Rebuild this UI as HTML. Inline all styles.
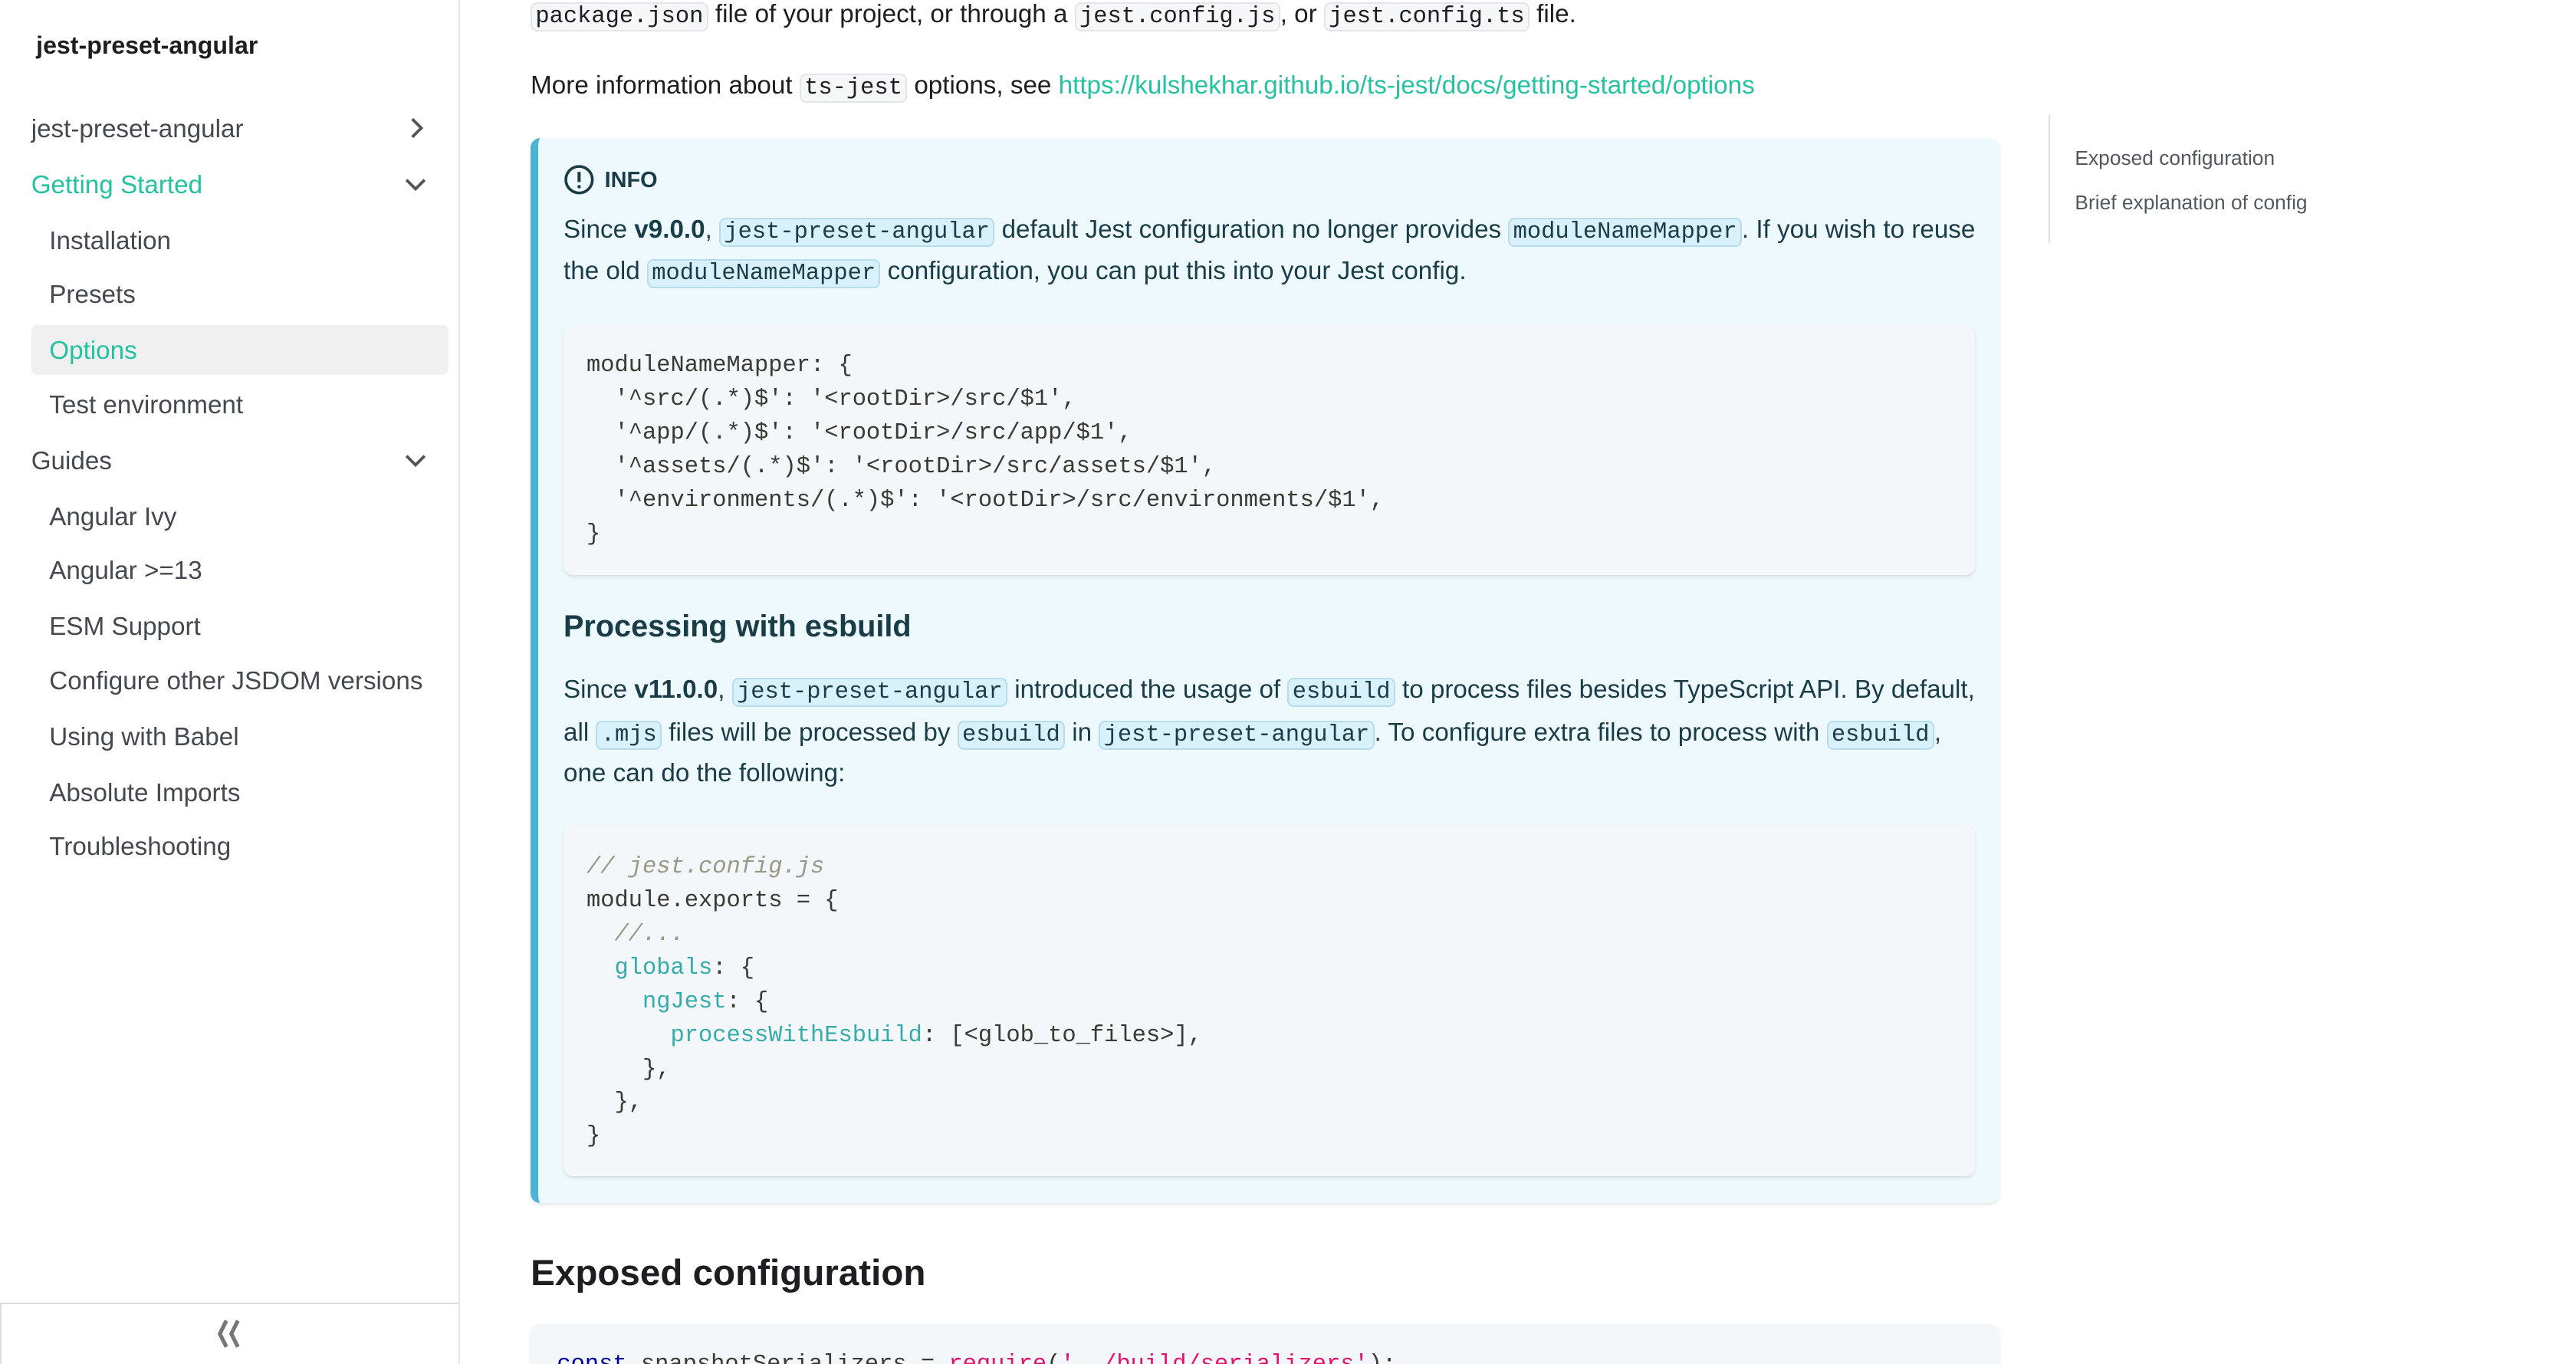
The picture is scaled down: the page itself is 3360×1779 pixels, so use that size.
<!DOCTYPE html>
<html><head><meta charset="utf-8"><style>
html,body{margin:0;padding:0;background:#fff;overflow:hidden}
#w{zoom:2.142857;width:1568px;height:830px;position:relative;font-family:"Liberation Sans",sans-serif;color:#1c1e21;overflow:hidden}
.a{position:absolute;white-space:nowrap}
.side{left:0;top:0;width:279px;height:830px;border-right:1px solid #e3e5e8}
.nav{font-size:15.5px;color:#444950;}
.g{color:#25c2a0}
.chev{position:absolute;left:246px;width:14px;height:14px}
code,.mono{font-family:"Liberation Mono",monospace}
.p{font-size:15.5px;color:#1c1e21;line-height:26px}
.ic{font-size:14.2px;background:#f6f7f8;border:1px solid #e3e5e8;border-radius:4px;padding:0 2px}
.ii{font-size:14.2px;background:#d9f1fb;border:1px solid #b6dde9;border-radius:4px;padding:0 2px;color:#193c47}
.cb{position:absolute;background:#f4f7fa;border-radius:6px;box-shadow:0 1px 2px rgba(0,0,0,.1);font-family:"Liberation Mono",monospace;font-size:14.2px;line-height:20.5px;color:#393a34;white-space:pre}
.cm{color:#999988;font-style:italic}.k{color:#36acaa}
</style></head><body><div id="w">
<div class="a side"></div>
<div class="a" style="left:22px;top:19px;font-size:15px;font-weight:bold;color:#1c1e21">jest-preset-angular</div>
<div class="a nav" style="left:19px;top:70px">jest-preset-angular</div>
<svg class="chev" style="top:71px" viewBox="0 0 14 14"><path d="M5 1.5 L10.5 7 L5 12.5" fill="none" stroke="#555" stroke-width="1.8"/></svg>
<div class="a nav g" style="left:19px;top:104px">Getting Started</div>
<svg class="chev" style="top:105px" viewBox="0 0 14 14"><path d="M1.5 4.5 L7 10 L12.5 4.5" fill="none" stroke="#555" stroke-width="1.8"/></svg>
<div class="a nav" style="left:30px;top:138px">Installation</div>
<div class="a nav" style="left:30px;top:171px">Presets</div>
<div class="a" style="left:19px;top:198px;width:254px;height:30px;background:#f0f0f0;border-radius:4px"></div>
<div class="a nav g" style="left:30px;top:205px">Options</div>
<div class="a nav" style="left:30px;top:238px">Test environment</div>
<div class="a nav" style="left:19px;top:272px">Guides</div>
<svg class="chev" style="top:273px" viewBox="0 0 14 14"><path d="M1.5 4.5 L7 10 L12.5 4.5" fill="none" stroke="#555" stroke-width="1.8"/></svg>
<div class="a nav" style="left:30px;top:306px">Angular Ivy</div>
<div class="a nav" style="left:30px;top:339px">Angular &gt;=13</div>
<div class="a nav" style="left:30px;top:373px">ESM Support</div>
<div class="a nav" style="left:30px;top:406px">Configure other JSDOM versions</div>
<div class="a nav" style="left:30px;top:440px">Using with Babel</div>
<div class="a nav" style="left:30px;top:474px">Absolute Imports</div>
<div class="a nav" style="left:30px;top:507px">Troubleshooting</div>
<div class="a" style="left:0;top:793px;width:279px;height:37px;border-top:1px solid #dadde1;border-left:1px solid #dadde1;box-sizing:border-box"></div>
<svg class="a" style="left:129px;top:801px" width="22" height="22" viewBox="0 0 22 22"><path d="M9 3 L5 11 L9 19 M16 3 L12 11 L16 19" fill="none" stroke="#777" stroke-width="2.4"/></svg>

<div class="a p" style="left:323px;top:-4px"><code class="ic">package.json</code> file of your project, or through a <code class="ic">jest.config.js</code>, or <code class="ic">jest.config.ts</code> file.</div>
<div class="a p" style="left:323px;top:39px">More information about <code class="ic">ts-jest</code> options, see <span style="color:#25c2a0">https://kulshekhar.github.io/ts-jest/docs/getting-started/options</span></div>

<div class="a" style="left:323px;top:84px;width:894px;height:648px;background:#eef9fd;border-left:5px solid #4cb3d4;border-radius:6px;box-sizing:border-box;box-shadow:0 1px 2px rgba(0,0,0,.1)"></div>
<svg class="a" style="left:343px;top:100px" width="19" height="19" viewBox="0 0 20 20"><circle cx="10" cy="10" r="8.5" fill="none" stroke="#193c47" stroke-width="1.8"/><path d="M10 5v6.5" stroke="#193c47" stroke-width="2"/><circle cx="10" cy="14.5" r="1.1" fill="#193c47"/></svg>
<div class="a" style="left:368px;top:102px;font-size:13.5px;font-weight:bold;color:#193c47">INFO</div>
<div class="a p" style="left:343px;top:127px;color:#193c47">Since <b>v9.0.0</b>, <code class="ii">jest-preset-angular</code> default Jest configuration no longer provides <code class="ii">moduleNameMapper</code>. If you wish to reuse</div>
<div class="a p" style="left:343px;top:152px;color:#193c47">the old <code class="ii">moduleNameMapper</code> configuration, you can put this into your Jest config.</div>
<div class="cb" style="left:343px;top:198px;width:859px;height:152px;padding:15px 0 0 14px;box-sizing:border-box">moduleNameMapper: {
  '^src/(.*)$': '&lt;rootDir&gt;/src/$1',
  '^app/(.*)$': '&lt;rootDir&gt;/src/app/$1',
  '^assets/(.*)$': '&lt;rootDir&gt;/src/assets/$1',
  '^environments/(.*)$': '&lt;rootDir&gt;/src/environments/$1',
}</div>
<div class="a" style="left:343px;top:371px;font-size:18.5px;font-weight:bold;color:#193c47">Processing with esbuild</div>
<div class="a p" style="left:343px;top:407px;color:#193c47">Since <b>v11.0.0</b>, <code class="ii">jest-preset-angular</code> introduced the usage of <code class="ii">esbuild</code> to process files besides TypeScript API. By default,</div>
<div class="a p" style="left:343px;top:433px;color:#193c47">all <code class="ii">.mjs</code> files will be processed by <code class="ii">esbuild</code> in <code class="ii">jest-preset-angular</code>. To configure extra files to process with <code class="ii">esbuild</code>,</div>
<div class="a p" style="left:343px;top:458px;color:#193c47">one can do the following:</div>
<div class="cb" style="left:343px;top:502px;width:859px;height:214px;padding:16px 0 0 14px;box-sizing:border-box"><span class="cm">// jest.config.js</span>
module.exports = {
  <span class="cm">//...</span>
  <span class="k">globals</span>: {
    <span class="k">ngJest</span>: {
      <span class="k">processWithEsbuild</span>: [&lt;glob_to_files&gt;],
    },
  },
}</div>
<div class="a" style="left:323px;top:762px;font-size:22.2px;font-weight:bold;color:#1c1e21">Exposed configuration</div>
<div class="cb" style="left:323px;top:806px;width:894px;height:40px;padding:15px 0 0 16px;box-sizing:border-box"><span style="color:#00009f">const</span> snapshotSerializers = <span style="color:#e3116c">require</span>(<span style="color:#e3116c">'../build/serializers'</span>);</div>

<div class="a" style="left:1247px;top:70px;width:1px;height:78px;background:#dadde1"></div>
<div class="a" style="left:1263px;top:89px;font-size:12.3px;color:#525860">Exposed configuration</div>
<div class="a" style="left:1263px;top:116px;font-size:12.3px;color:#525860">Brief explanation of config</div>
</div></body></html>
